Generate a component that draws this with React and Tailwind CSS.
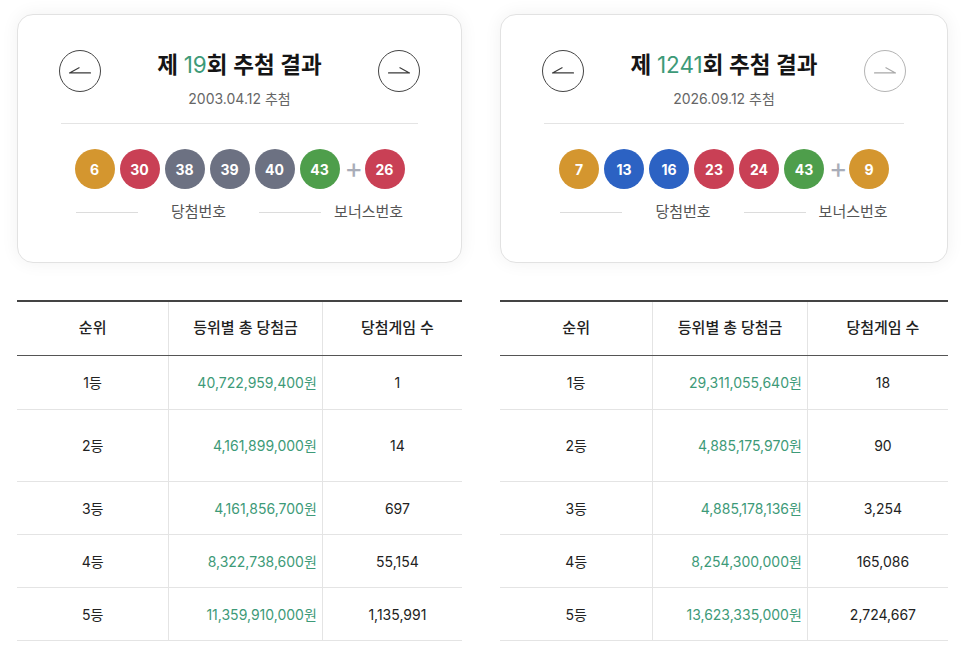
import React from 'react';

const FONT = { fontFamily: '"Inter", "Noto Sans CJK KR", sans-serif' };

function ballColor(n) {
    if (n <= 10) return 'bg-[#d4962f]';
    if (n <= 20) return 'bg-[#2c62c3]';
    if (n <= 30) return 'bg-[#c94055]';
    if (n <= 40) return 'bg-[#6c7182]';
    return 'bg-[#4e9e4b]';
}

function Ball({ n }) {
    return (
        <div className={`w-10 h-10 rounded-full flex items-center justify-center text-white text-[14px] font-bold ${ballColor(n)}`}>
            {n}
        </div>
    );
}

function ArrowButton({ dir, disabled }) {
    const stroke = disabled ? '#a8a8a8' : '#3a3a3a';
    return (
        <button className={`w-[42px] h-[42px] rounded-full border shrink-0 flex items-center justify-center ${disabled ? 'border-[#b4b4b4]' : 'border-[#444]'}`}>
            <svg width="42" height="42" viewBox="0 0 42 42" fill="none">
                {dir === 'left' ? (
                    <path d="M10 23 H32 M10 23 L20 17.5" stroke={stroke} strokeWidth="1.2" strokeLinecap="round" />
                ) : (
                    <path d="M10 23 H32 M32 23 L22 17.5" stroke={stroke} strokeWidth="1.2" strokeLinecap="round" />
                )}
            </svg>
        </button>
    );
}

function DrawCard({ round, date, numbers, bonus, nextDisabled }) {
    return (
        <div className="bg-white rounded-2xl border border-[#e2e2e2] shadow-[0_0_18px_rgba(0,0,0,0.06)] px-[41px] pt-[35px] pb-[40px]">
            <div className="flex items-start justify-between">
                <ArrowButton dir="left" />
                <div className="flex flex-col items-center">
                    <div className="text-[22.5px] leading-[28px] font-semibold text-[#151515] mt-px">
                        제 <span className="text-[#3d9a78] font-normal">{round}</span>회 추첨 결과
                    </div>
                    <div className="text-[14px] leading-[18px] text-[#666] mt-[11px]">{date} 추첨</div>
                </div>
                <ArrowButton dir="right" disabled={nextDisabled} />
            </div>
            <div className="h-px bg-[#e4e4e4] mx-[2px] mt-[15px]" />
            <div className="flex items-center justify-center gap-[5px] mt-[25px]">
                {numbers.map(n => <Ball key={n} n={n} />)}
                <span className="text-[#a9adb8] text-[28px] leading-none w-[15px] text-center -mt-[2px]">+</span>
                <Ball n={bonus} />
            </div>
            <div className="flex items-center justify-center mt-[13px] text-[15px] leading-[20px] text-[#555]">
                <div className="w-[62px] h-px bg-[#dcdcdc]" />
                <span className="mx-[33px]">당첨번호</span>
                <div className="w-[62px] h-px bg-[#dcdcdc]" />
                <span className="ml-[13px]">보너스번호</span>
            </div>
        </div>
    );
}

function PrizeTable({ rows }) {
    const heights = ['h-[54px]', 'h-[72px]', 'h-[53px]', 'h-[53px]', 'h-[53px]'];
    return (
        <div className="border-t-2 border-[#444] text-[14px] text-[#222]">
            <div className="grid grid-cols-[34%_34.5%_1fr] h-[54px] border-b-[1.5px] border-[#555] font-medium text-[15px]">
                <div className="flex items-center justify-center">순위</div>
                <div className="flex items-center justify-center border-l border-[#e4e4e4]">등위별 총 당첨금</div>
                <div className="flex items-center justify-center pl-[10px] border-l border-[#e4e4e4]">당첨게임 수</div>
            </div>
            {rows.map((r, i) => (
                <div key={r.rank} className={`grid grid-cols-[34%_34.5%_1fr] border-b border-[#e4e4e4] ${heights[i]}`}>
                    <div className="flex items-center justify-center">{r.rank}</div>
                    <div className="flex items-center justify-end pr-[5px] border-l border-[#e4e4e4] text-[#3d9a78]">{r.amount}원</div>
                    <div className="flex items-center justify-center pl-[10px] border-l border-[#e4e4e4]">{r.count}</div>
                </div>
            ))}
        </div>
    );
}

const left = {
    round: 19,
    date: '2003.04.12',
    numbers: [6, 30, 38, 39, 40, 43],
    bonus: 26,
    rows: [
        { rank: '1등', amount: '40,722,959,400', count: '1' },
        { rank: '2등', amount: '4,161,899,000', count: '14' },
        { rank: '3등', amount: '4,161,856,700', count: '697' },
        { rank: '4등', amount: '8,322,738,600', count: '55,154' },
        { rank: '5등', amount: '11,359,910,000', count: '1,135,991' },
    ],
};

const right = {
    round: 1241,
    date: '2026.09.12',
    numbers: [7, 13, 16, 23, 24, 43],
    bonus: 9,
    rows: [
        { rank: '1등', amount: '29,311,055,640', count: '18' },
        { rank: '2등', amount: '4,885,175,970', count: '90' },
        { rank: '3등', amount: '4,885,178,136', count: '3,254' },
        { rank: '4등', amount: '8,254,300,000', count: '165,086' },
        { rank: '5등', amount: '13,623,335,000', count: '2,724,667' },
    ],
};

export default function App() {
    return (
        <div className="min-h-screen bg-white px-[17px] pt-[14px]" style={FONT}>
            <div className="grid grid-cols-[445px_448px] gap-x-[38px]">
                <div className="flex flex-col gap-[37px]">
                    <DrawCard {...left} />
                    <PrizeTable rows={left.rows} />
                </div>
                <div className="flex flex-col gap-[37px]">
                    <DrawCard {...right} nextDisabled />
                    <PrizeTable rows={right.rows} />
                </div>
            </div>
        </div>
    );
}
